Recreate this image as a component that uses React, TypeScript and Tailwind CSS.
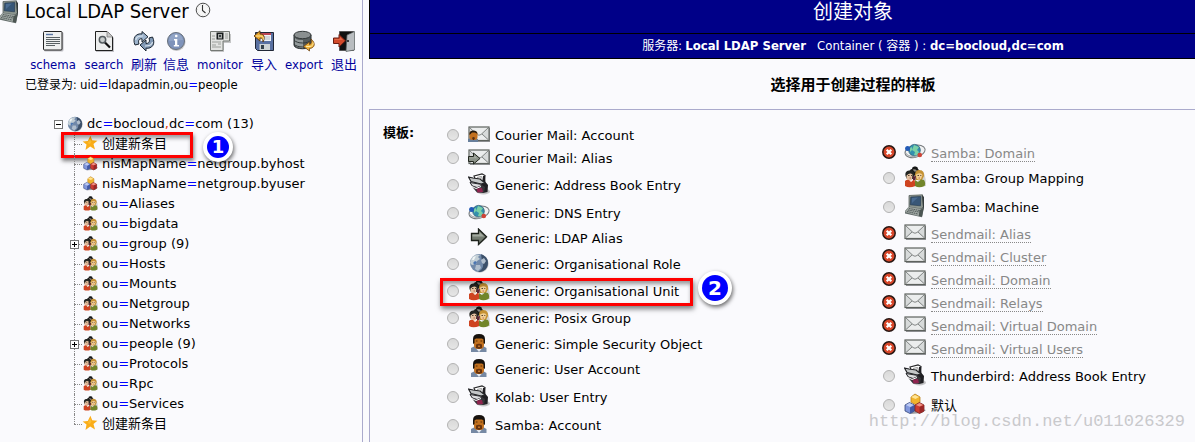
import { useState } from "react";
import type { ComponentType, ReactNode } from "react";

function ComputerIcon({ className }: { className?: string }) {
  return (
    <svg width="22" height="24" viewBox="0 0 22 24" fill="none" className={className}>
      <path d="M5 1.5L18.5 0.8L19.5 13L17 15L5 13Z" fill="#8b958f" stroke="#59615e" strokeWidth="0.8" />
      <path d="M18 1L20 3V15L17 16L19 13Z" fill="#343b3b" />
      <path d="M6.8 3L16.8 2.5L16.5 11.8L6.2 10.8Z" fill="#385777" stroke="#22364c" strokeWidth="0.6" />
      <path d="M8 4L14 3.6L8 9Z" fill="#4b6c92" />
      <path d="M4.5 13L17 14.5L20 13.5L18 23.2L1 19.5L1 17Z" fill="#626b69" />
      <path d="M4.5 13L17.5 15L14.5 22L1 18Z" fill="#9ea6a2" />
      <path d="M5 14.5L15.5 16.5M4 16L15 18M3 17.5L14 20" stroke="#4c5553" strokeWidth="0.9" strokeDasharray="1.6 0.7" />
      <path d="M15.5 16L19.5 14.5L18 22.5L14.8 22Z" fill="#4b5552" />
    </svg>
  );
}

function ClockIcon() {
  return (
    <svg width="16" height="16" viewBox="0 0 16 16" fill="none">
      <circle cx="8" cy="8" r="6.8" fill="#f7f7f7" stroke="#4d4d4d" strokeWidth="1" />
      <circle cx="8" cy="8" r="5.5" stroke="#cccccc" strokeWidth="0.8" strokeDasharray="0.8 2" />
      <path d="M7.5 3V8.5L10.5 11" stroke="#333" strokeWidth="1.1" />
    </svg>
  );
}

function SchemaIcon() {
  return (
    <svg width="22" height="22" viewBox="0 0 22 22" fill="none">
      <rect x="2" y="2" width="19.5" height="19.5" rx="1.5" fill="#bfbfc5" />
      <rect x="1.5" y="1.5" width="18.5" height="18.5" rx="1" fill="#eef0f0" stroke="#222" />
      <path d="M4 4.5H11" stroke="#5874a3" strokeWidth="1.4" />
      <path d="M4 7.5H18M4 9.5H18M4 11.5H18M4 13.5H18M4 15.5H13" stroke="#596164" strokeWidth="1" />
    </svg>
  );
}

function SearchIcon() {
  return (
    <svg width="22" height="22" viewBox="0 0 22 22" fill="none">
      <path d="M3 2H15L21 8V22H3Z" fill="#c2c2c7" />
      <path d="M2.5 1.5H14L19.5 7V20.5H2.5Z" fill="#edeeee" stroke="#202020" />
      <path d="M14 1.5V7H19.5" fill="#c9caca" stroke="#777" strokeWidth="0.7" />
      <path d="M11.5 12L17 17.5" stroke="#101010" strokeWidth="2.2" />
      <circle cx="9.5" cy="9.8" r="3.2" fill="#c7cccc" stroke="#555c60" strokeWidth="1.5" />
    </svg>
  );
}

function RefreshIcon() {
  return (
    <svg width="22" height="22" viewBox="0 0 22 22" fill="none">
      <path d="M2 15C-1 8 3 3 9 4V1.5L15 6.8L9 12V8.8C5.5 8.5 5 11 6 14Z" fill="#9eb4cd" stroke="#1c2733" />
      <path d="M19.5 7C23 14 19 19 13 18.2V21L7 15L13 10V13.5C16.5 13.5 17 11 16 8Z" fill="#8299b5" stroke="#1c2733" />
      <path d="M2.8 10C3 7 5.5 5.8 10 6M19.5 12C19 15 16.5 16 12 16" stroke="#dbe5ed" strokeWidth="1.2" />
    </svg>
  );
}

function InfoIcon() {
  return (
    <svg width="22" height="22" viewBox="0 0 22 22" fill="none">
      <circle cx="11.5" cy="12" r="9" fill="#c5c5c7" />
      <circle cx="11" cy="11" r="8.5" fill="#7f93ba" stroke="#68717c" />
      <path d="M4 11A7 7 0 0 1 18 10Z" fill="#91a4c6" />
      <path d="M9 9H12.3V15H14V16.5H8.8V15H10V10.5H9Z" fill="#fff" />
      <rect x="10" y="4.8" width="2.5" height="2.5" rx="1" fill="#fff" />
    </svg>
  );
}

function MonitorIcon() {
  return (
    <svg width="22" height="22" viewBox="0 0 22 22" fill="none">
      <path d="M2 4H22V13H15V22H2Z" fill="#c5c6c7" />
      <path d="M1.5 1.5H20.5V11H14V20.5H1.5Z" fill="#e2e3e1" stroke="#747874" />
      <rect x="7.5" y="2.5" width="7" height="7" fill="#171b1c" />
      <path d="M9 4H13V8.5H9Z" fill="#a6a9a6" />
      <path d="M10 5H12V7H10Z" fill="#394044" />
      <path d="M16 4H19M16 6H19M16 8H19M3 6H6M3 9H6M3 12H12M3 15H7M9 14H12M3 17H12" stroke="#9b9e9a" />
    </svg>
  );
}

function ImportIcon() {
  return (
    <svg width="22" height="22" viewBox="0 0 22 22" fill="none">
      <path d="M2.5 2.5H20.5V20.5H4.5L2.5 18.5Z" fill="#5970a1" stroke="#202736" />
      <path d="M7 3H18V11H7Z" fill="#f0f2f6" />
      <path d="M7 3H18V5H7Z" fill="#bd4553" />
      <path d="M9 7H17M9 9H17" stroke="#b4b9c0" />
      <path d="M6.5 14H17V20H6.5Z" fill="#cdd2d4" />
      <path d="M8 15H11V19H8Z" fill="#34404a" />
      <path d="M1 6L7 0.8V4C11 4 12.5 7 10 12C10 9 9 8 7 8V11Z" fill="#ecaa2e" stroke="#583713" strokeWidth="0.9" />
      <path d="M3 6H8C10 6 11 8 10 10" stroke="#fbe3a0" />
    </svg>
  );
}

function ExportIcon() {
  return (
    <svg width="22" height="22" viewBox="0 0 22 22" fill="none">
      <path d="M1 5V15C1 20 18 20 18 15V5Z" fill="#545a5b" stroke="#292e30" />
      <path d="M2 8V15C4 18 8 18 10 18V10C6 10 4 10 2 8Z" fill="#92999a" />
      <ellipse cx="9.5" cy="5" rx="8.5" ry="3.7" fill="#8a8f90" stroke="#333839" />
      <path d="M1 10C4 14 15 14 18 10M1 14C4 18 15 18 18 14" stroke="#333a3b" />
      <path d="M18 9C23 13 22 18 16.5 18.5V21L10.5 16.5L16.5 12V14.5C18.5 14 19 12 18 9Z" fill="#eeb23c" stroke="#6e4517" strokeWidth="0.8" />
      <path d="M13 16.5H17C20 16 20.5 14 20 12.5" stroke="#ffeaa1" />
    </svg>
  );
}

function LogoutIcon() {
  return (
    <svg width="22" height="22" viewBox="0 0 22 22" fill="none">
      <path d="M6.5 1.5H20.5V20.5H6.5Z" fill="#111" stroke="#555" />
      <path d="M14 5L21.5 1.5V20L13 21.5Z" fill="#b9bdc0" stroke="#555b5c" strokeWidth="0.7" />
      <path d="M14 11H16" stroke="#111" strokeWidth="1.4" />
      <path d="M0.5 8H6V4.5L12.5 10.8L6 17V13.5H0.5Z" fill="#d24a2b" stroke="#681d13" />
      <path d="M1.5 9H7V7L10 10H1.5Z" fill="#e26a49" />
    </svg>
  );
}

function GlobeIcon({ size = 20 }: { size?: number }) {
  return (
    <svg width={size} height={size} viewBox="0 0 20 20" fill="none">
      <circle cx="10.7" cy="10.7" r="9" fill="#c8c8ca" />
      <circle cx="10" cy="10" r="9" fill="#7189a9" />
      <path d="M12 1.2C18 3 20 8 18.5 13C17 17 14 19 9 19C15 16 15 11 13 8Z" fill="#3c506a" />
      <path d="M2 6C4 2 8 1 11 2L9 4L11 6L8 8L7 11L3 12L1 10Z" fill="#c2ced5" />
      <path d="M12 7L15 5L17 8L15 11L13 10ZM7 12L11 12L12 15L9 18L6 16Z" fill="#b0becd" />
      <path d="M4 4L7 3L5 7L3 7Z" fill="#f0f5f5" />
      <path d="M6 8L8 9L6 12L4 10Z" fill="#4b75b1" />
    </svg>
  );
}

function StarIcon() {
  return (
    <svg width="16" height="16" viewBox="0 0 16 16">
      <path d="M8.4 0.8L10.2 5.3L15.4 5.7L11.5 9.1L13 14.6L8.2 11.6L3.5 14.9L4.5 9.6L0.6 6.6L5.8 5.9Z" fill="#faad19" />
      <path d="M8.2 3.2L9.5 6.5L8 9L5.5 8L6.4 6.8Z" fill="#fdbd34" />
    </svg>
  );
}

function PeopleIcon({ size = 22 }: { size?: number }) {
  return (
    <svg width={size} height={size} viewBox="0 0 22 22">
      <path d="M17 4Q22 6 22 20L12 21Z" fill="#d2d2d2" />
      <path d="M6 5Q6 3 8 3Q8 0 11 0.5Q14 0 14 3L16 5L11 10Z" fill="#151615" />
      <path d="M8.5 3.5Q11 2.5 13 4.5L11 6Z" fill="#8d8a82" />
      <path d="M1.5 10Q0.5 5 5 4.5Q10 3.5 10.5 9L9 13H3Z" fill="#242522" />
      <path d="M2.5 9.5Q6 6 8.5 8.5L8 14Q4 16 2.5 12Z" fill="#e6c3a2" />
      <path d="M1 15Q3 13 5 14L7 16L10.5 13L11.5 20Q5 22.5 1 20Z" fill="#ce4421" />
      <path d="M11 9Q11 4 15.5 4Q20.5 4.5 20 10L18 14H12Z" fill="#c59234" />
      <path d="M12 8.5Q17 6 18.5 9L17 13Q14 15 12.5 12Z" fill="#f1cf94" />
      <path d="M11 14L14 16L17 13.5L20 14Q22 17 20.5 20Q15 22.5 11 20Z" fill="#71852a" />
      <path d="M8.5 10.5L12 10L11.5 14L9 14Z" fill="#5b2532" />
      <path d="M4 9.5H5.5M7 9.5H8M13.5 9.5H15M16.3 9.5H17.3" stroke="#433322" strokeWidth="0.9" />
      <path d="M5.5 12H7M14.5 12H16" stroke="#b35545" strokeWidth="0.8" />
    </svg>
  );
}

function CubesIcon({ size = 22 }: { size?: number }) {
  return (
    <svg width={size} height={size} viewBox="0 0 22 22">
      <path d="M4 18L13 15L22 17L18 20L7 21Z" fill="#9d9da0" />
      <path d="M7 4L11 1L16 4V9L12 12L7 9Z" fill="#f1b42d" stroke="#bd8420" strokeWidth="0.8" />
      <path d="M7 4L11 2L15 4L11.5 6Z" fill="#ffe494" />
      <path d="M1 12L5.5 9.5L10.5 12V18L6 20.5L1 18Z" fill="#8298dd" stroke="#344579" strokeWidth="0.8" />
      <path d="M6 14.5L10.5 12V18L6 20.5Z" fill="#4359a5" />
      <path d="M2 12L5.5 10L9.5 12L6 14Z" fill="#bdcaf5" />
      <path d="M11 12L15.5 9.5L20 12V18L15.5 20.5L11 18Z" fill="#ce3c32" stroke="#7a2523" strokeWidth="0.8" />
      <path d="M15.5 14L20 12V18L15.5 20.5Z" fill="#9b2728" />
      <path d="M12 12L15.5 10L19 12L15.5 13.5Z" fill="#ee9386" />
    </svg>
  );
}

function EnvelopeShape() {
  return (
    <>
      <path d="M2 2H22V16H2Z" fill="#929497" />
      <rect x="1" y="1" width="20" height="13.5" fill="#ebeded" stroke="#5d625e" strokeWidth="1.2" />
      <path d="M2 2.5L9 8L2 14ZM20 2.5L13 8L20 14Z" fill="#d7dada" />
      <path d="M2 2L9 8.5Q11 10 13 8.5L20 2M2 13.5L8 8M20 13.5L14 8" stroke="#777c7a" strokeWidth="0.9" fill="none" />
    </>
  );
}

function MailIcon() {
  return (
    <svg width="22" height="16" viewBox="0 0 22 16">
      <EnvelopeShape />
    </svg>
  );
}

function MailUserIcon() {
  return (
    <svg width="22" height="16" viewBox="0 0 22 16">
      <EnvelopeShape />
      <path d="M0 16V13L4 12L10 13V16Z" fill="#687f9c" />
      <rect x="1.5" y="5" width="8" height="9" rx="3" fill="#c2701f" />
      <path d="M1.5 9V7Q2 4.5 5.5 4.5Q9 4.5 9.5 8L7 6.5H4Z" fill="#201912" />
      <path d="M4 12Q5.5 10 7 12L6 14H5Z" fill="#563016" />
    </svg>
  );
}

function MailForwardIcon() {
  return (
    <svg width="22" height="16" viewBox="0 0 22 16">
      <EnvelopeShape />
      <path d="M0.5 7.5H5.5V4L12 9.5L5.5 15V12.5H0.5Z" fill="#8c9389" stroke="#22271f" />
      <path d="M1.5 8.5H6.5V6.5L9 9.3H1.5Z" fill="#a9b0a6" />
    </svg>
  );
}

function AddressBookIcon() {
  return (
    <svg width="22" height="22" viewBox="0 0 22 22">
      <ellipse cx="15.5" cy="18.5" rx="6.5" ry="3" fill="#c4c4c6" />
      <path d="M6 3L14 0.8L17 2.5L16 10L8 9Z" fill="#fff" stroke="#262628" strokeWidth="1.2" />
      <path d="M9 4.5L13.5 3.5L12.5 7" fill="none" stroke="#999" />
      <path d="M15 3L17 3L17.5 9L20 12L19.5 19L15 20L12 17L14 10Z" fill="#1f1e22" />
      <path d="M0.5 4L5 5L12 6L17 10L13 11L3 8.5Z" fill="#c4c7c8" stroke="#212225" strokeWidth="1.2" />
      <path d="M2 9.5L14 11.5L11 15L5 14Z" fill="#dcdddf" stroke="#242529" />
      <path d="M3 12L9 14L14 12L17 14L16 20L9 19.5L6 16Z" fill="#36353a" />
      <path d="M8.5 15.5L14 15L15 19L9.5 19.5Z" fill="#8f244f" />
      <path d="M3 13L8 15.5L13 13.5" stroke="#fff" fill="none" />
    </svg>
  );
}

function DnsIcon() {
  return (
    <svg width="22" height="16" viewBox="0 0 22 16" fill="none">
      <ellipse cx="11" cy="8.3" rx="10.2" ry="6" fill="#f0f1f2" stroke="#75797c" transform="rotate(-14 11 8)" />
      <circle cx="10.5" cy="7.2" r="5.8" fill="#338fae" stroke="#326177" strokeWidth="0.8" />
      <path d="M10 2L15 4L13 7L15 9L13 12.5L10 12L11 9L8 7ZM6 5L8 4L8 7L6 9Z" fill="#7bd0a6" />
      <path d="M1 9C3 13 8 14.5 14 12.5" stroke="#91999c" strokeWidth="0.9" />
      <circle cx="3.6" cy="5.4" r="2.5" fill="#235bb7" />
      <circle cx="15.8" cy="12" r="2.3" fill="#cf4437" />
    </svg>
  );
}

function ArrowIcon() {
  return (
    <svg width="18" height="18" viewBox="0 0 18 18">
      <path d="M2 6H8.5V1.8L17.5 9.5L8.5 17.5V13H2Z" fill="#c5c6c7" />
      <path d="M1.5 5.5H8.5V1L16.5 8.8L8.5 16.5V12.5H1.5Z" fill="#747c71" stroke="#1c211b" strokeWidth="1.3" />
      <path d="M2.5 6.5H9.5V4L14 8.5H2.5Z" fill="#a2a99f" />
    </svg>
  );
}

function UserIcon() {
  return (
    <svg width="18" height="18" viewBox="0 0 18 18">
      <path d="M1 18V14L5 12H13L16.5 14V18Z" fill="#7689a4" />
      <path d="M6 14.5L9 18L12 14.5Z" fill="#e5e9ef" />
      <rect x="4" y="2" width="10" height="13" rx="4" fill="#c2711f" />
      <path d="M3 10V5Q3 0 9 0Q15 0 15 5V10L13.5 9V5.5L12 4.5H6L4.5 5.5V9Z" fill="#17120e" />
      <path d="M6 14V10.5Q9 8.8 12 10.5V14L9 15Z" fill="#68330e" />
      <path d="M8 11.5H10V13H8Z" fill="#bf732c" />
      <path d="M5.8 7H7.5M10.5 7H12.2" stroke="#3c2009" strokeWidth="0.8" />
    </svg>
  );
}

function InvalidIcon() {
  return (
    <svg width="14" height="14" viewBox="0 0 14 14">
      <circle cx="7" cy="7" r="6.2" fill="#d8472a" stroke="#281713" strokeWidth="1.5" />
      <path d="M4.7 4.7L9.3 9.3M9.3 4.7L4.7 9.3" stroke="#fff" strokeWidth="2.2" />
    </svg>
  );
}

interface Tool {
  label: string;
  width: string;
  icon: ComponentType;
}

const TOOLS: Tool[] = [
  { label: "schema", width: "w-[46px]", icon: SchemaIcon },
  { label: "search", width: "w-10", icon: SearchIcon },
  { label: "刷新", width: "w-6", icon: RefreshIcon },
  { label: "信息", width: "w-6", icon: InfoIcon },
  { label: "monitor", width: "w-12", icon: MonitorIcon },
  { label: "导入", width: "w-6", icon: ImportIcon },
  { label: "export", width: "w-10", icon: ExportIcon },
  { label: "退出", width: "w-6", icon: LogoutIcon },
];

interface Entry {
  name: string;
  kind: "new" | "map" | "ou";
  expandable?: boolean;
  step?: string;
}

const ENTRIES: Entry[] = [
  { name: "创建新条目", kind: "new", step: "1" },
  { name: "nisMapName=netgroup.byhost", kind: "map" },
  { name: "nisMapName=netgroup.byuser", kind: "map" },
  { name: "ou=Aliases", kind: "ou" },
  { name: "ou=bigdata", kind: "ou" },
  { name: "ou=group (9)", kind: "ou", expandable: true },
  { name: "ou=Hosts", kind: "ou" },
  { name: "ou=Mounts", kind: "ou" },
  { name: "ou=Netgroup", kind: "ou" },
  { name: "ou=Networks", kind: "ou" },
  { name: "ou=people (9)", kind: "ou", expandable: true },
  { name: "ou=Protocols", kind: "ou" },
  { name: "ou=Rpc", kind: "ou" },
  { name: "ou=Services", kind: "ou" },
  { name: "创建新条目", kind: "new" },
];

interface Template {
  name: string;
  height: string;
  icon: ComponentType;
  disabled?: boolean;
  step?: string;
}

const LEFT_TEMPLATES: Template[] = [
  { name: "Courier Mail: Account", height: "h-[22px]", icon: MailUserIcon },
  { name: "Courier Mail: Alias", height: "h-6", icon: MailForwardIcon },
  { name: "Generic: Address Book Entry", height: "h-[30px]", icon: AddressBookIcon },
  { name: "Generic: DNS Entry", height: "h-[26px]", icon: DnsIcon },
  { name: "Generic: LDAP Alias", height: "h-6", icon: ArrowIcon },
  { name: "Generic: Organisational Role", height: "h-7", icon: GlobeIcon },
  { name: "Generic: Organisational Unit", height: "h-[26px]", icon: PeopleIcon, step: "2" },
  { name: "Generic: Posix Group", height: "h-7", icon: PeopleIcon },
  { name: "Generic: Simple Security Object", height: "h-6", icon: UserIcon },
  { name: "Generic: User Account", height: "h-[26px]", icon: UserIcon },
  { name: "Kolab: User Entry", height: "h-[30px]", icon: AddressBookIcon },
  { name: "Samba: Account", height: "h-[26px]", icon: UserIcon },
];

const RIGHT_TEMPLATES: Template[] = [
  { name: "Samba: Domain", height: "h-6", icon: DnsIcon, disabled: true },
  { name: "Samba: Group Mapping", height: "h-7", icon: PeopleIcon },
  { name: "Samba: Machine", height: "h-[30px]", icon: ComputerIcon },
  { name: "Sendmail: Alias", height: "h-[22px]", icon: MailIcon, disabled: true },
  { name: "Sendmail: Cluster", height: "h-6", icon: MailIcon, disabled: true },
  { name: "Sendmail: Domain", height: "h-[22px]", icon: MailIcon, disabled: true },
  { name: "Sendmail: Relays", height: "h-6", icon: MailIcon, disabled: true },
  { name: "Sendmail: Virtual Domain", height: "h-[22px]", icon: MailIcon, disabled: true },
  { name: "Sendmail: Virtual Users", height: "h-6", icon: MailIcon, disabled: true },
  { name: "Thunderbird: Address Book Entry", height: "h-8", icon: AddressBookIcon },
  { name: "默认", height: "h-[26px]", icon: CubesIcon },
];

// "=" is drawn blue and "," red in every DN
function Dn({ children, plainComma }: { children: string; plainComma?: boolean }) {
  const parts: ReactNode[] = children.split(/([=,])/).map((part, i) => {
    if (part === "=") return <span key={i} className="text-[#0000ff]">=</span>;
    if (part === "," && !plainComma) return <span key={i} className="text-[#dd3300]">,</span>;
    return part;
  });
  return <>{parts}</>;
}

function Toggle({ open }: { open?: boolean }) {
  return (
    <button type="button" aria-label={open ? "collapse" : "expand"} className="relative block size-[9px] shrink-0 bg-white">
      <svg width="9" height="9" viewBox="0 0 9 9" fill="none" stroke="#000">
        <rect x="0.5" y="0.5" width="8" height="8" stroke="#777" />
        <path d="M2 4.5H7" />
        {!open && <path d="M4.5 2V7" />}
      </svg>
    </button>
  );
}

function TreeRow({ entry, last }: { entry: Entry; last: boolean }) {
  return (
    <li className="relative flex h-5 items-center">
      <div className="relative flex h-5 w-3 shrink-0 items-center">
        <div className={`absolute left-1 top-0 border-l border-dotted border-[#888888] ${last ? "h-2.5" : "h-5"}`} />
        <div className="absolute left-1 top-2.5 w-2 border-t border-dotted border-[#888888]" />
        {entry.expandable && <Toggle />}
      </div>
      <a href="#" className="flex items-center gap-1 whitespace-nowrap">
        <span className="mb-0.5 flex w-4 shrink-0 justify-center">
          {entry.kind === "new" && <StarIcon />}
          {entry.kind === "map" && <CubesIcon size={15} />}
          {entry.kind === "ou" && <PeopleIcon size={15} />}
        </span>
        <span><Dn>{entry.name}</Dn></span>
      </a>
      {entry.step && (
        <>
          <div className="pointer-events-none absolute -left-[9px] -top-0.5 h-[26px] w-[132px] border-3 border-[#fe0000] shadow-[1px_3px_4px_rgba(0,0,0,0.5),inset_1px_3px_4px_rgba(0,0,0,0.4)]" />
          <div className="absolute -top-0.5 left-[133px] z-10 flex size-[30px] items-center justify-center rounded-full bg-white shadow-[1px_2px_4px_rgba(0,0,0,0.6)]">
            <span className="flex size-[22px] items-center justify-center rounded-full bg-[#0000fe] text-lg font-bold text-white">{entry.step}</span>
          </div>
        </>
      )}
    </li>
  );
}

function TemplateRow({ template, selected, onSelect }: { template: Template; selected: boolean; onSelect: () => void }) {
  const { name, height, icon: Icon, disabled, step } = template;
  return (
    <li className={`relative flex items-center ${height}`}>
      <label className="flex items-center whitespace-nowrap">
        {disabled ? (
          <InvalidIcon />
        ) : (
          <input
            type="radio"
            name="template"
            checked={selected}
            onChange={onSelect}
            className="mx-px size-3 shrink-0 appearance-none rounded-full border border-[#b2b2b2] bg-linear-to-b from-[#d9d9d9] to-[#e6e6e6] checked:border-4 checked:border-[#555555]"
          />
        )}
        <span className="mb-0.5 ml-2 flex w-[22px] shrink-0 justify-center"><Icon /></span>
        {disabled ? (
          <span className="ml-[5px] mt-1 border-b border-dotted border-[#888888] leading-[14px] text-[#888888]">{name}</span>
        ) : (
          <span className="ml-[5px] mt-0.5">{name}</span>
        )}
      </label>
      {step && (
        <>
          <div className="pointer-events-none absolute -left-1.5 top-0 h-7 w-[253px] border-3 border-[#fe0000] shadow-[1px_3px_5px_rgba(0,0,0,0.5),inset_1px_3px_4px_rgba(0,0,0,0.4)]" />
          <div className="absolute -top-[7px] left-[252px] flex size-[34px] items-center justify-center rounded-full bg-white shadow-[1px_2px_4px_rgba(0,0,0,0.6)]">
            <span className="flex size-[26px] items-center justify-center rounded-full bg-[#0000fe] text-xl font-bold text-white">{step}</span>
          </div>
        </>
      )}
    </li>
  );
}

export default function App() {
  const [selected, setSelected] = useState("");

  const renderTemplate = (t: Template) => (
    <TemplateRow key={t.name} template={t} selected={selected === t.name} onSelect={() => setSelected(t.name)} />
  );

  return (
    <div className="relative flex min-h-screen overflow-hidden bg-[#fafafd] font-['DejaVu_Sans','Noto_Sans_CJK_SC',sans-serif] text-[13px] leading-5 text-black">
      <aside className="w-[363px] shrink-0 border-r border-[#aaaacc]">
        <div className="font-['DejaVu_Sans_Condensed','Noto_Sans_CJK_SC',sans-serif]">
          <div className="flex h-6 items-start">
            <ComputerIcon className="-ml-0.5 mr-[5px]" />
            <h1 className="text-xl leading-[22px]">Local LDAP Server</h1>
            <span className="ml-1.5 mt-0.5"><ClockIcon /></span>
          </div>
          <nav className="mt-1.5 flex gap-2 pl-[30px]">
            {TOOLS.map(({ label, width, icon: Icon }) => (
              <a key={label} href="#" className={`flex shrink-0 flex-col items-center whitespace-nowrap text-[#00009c] ${width}`}>
                <Icon />
                <span className="mt-[3px]">{label}</span>
              </a>
            ))}
          </nav>
          <p className="pl-[25px]">
            <span className="text-xs">已登录为: </span>
            <Dn plainComma>uid=ldapadmin,ou=people</Dn>
          </p>
        </div>
        <div className="mt-[19px] pl-[54px]">
          <div className="flex h-5 items-center">
            <Toggle open />
            <span className="mx-1"><GlobeIcon size={16} /></span>
            <a href="#" className="whitespace-nowrap"><Dn>dc=bocloud,dc=com (13)</Dn></a>
          </div>
          <ul className="pl-4">
            {ENTRIES.map((entry, i) => (
              <TreeRow key={i} entry={entry} last={i === ENTRIES.length - 1} />
            ))}
          </ul>
        </div>
      </aside>

      <main className="ml-1.5 flex min-w-[968px] flex-1 flex-col">
        <header className="border border-t-0 border-black bg-[#000088] text-center font-['DejaVu_Sans_Condensed','Noto_Sans_CJK_SC',sans-serif] text-white">
          <h2 className="h-[34px] border-b border-black text-xl leading-6">创建对象</h2>
          <p className="h-6 leading-6">
            <span className="text-xs">服务器: </span>
            <b>Local LDAP Server</b> &nbsp; Container ( <span className="text-xs">容器</span> ) : <b>dc=bocloud,dc=com</b>
          </p>
        </header>
        <h3 className="mb-[15px] mt-[17px] text-center text-[15px] font-bold leading-[18px]">选择用于创建过程的样板</h3>
        <form className="flex flex-1 border border-b-0 border-[#aaaacc] pt-3.5">
          <div className="w-[76px] shrink-0 pl-[13px] font-bold leading-[18px]">模板:</div>
          <ul className="w-[436px] shrink-0">{LEFT_TEMPLATES.map(renderTemplate)}</ul>
          <ul className="flex-1 pt-4">{RIGHT_TEMPLATES.map(renderTemplate)}</ul>
        </form>
      </main>

      <div className="pointer-events-none absolute bottom-2.5 right-2.5 font-['Liberation_Mono',monospace] text-[17px] leading-5 text-[#c9c9cc]">
        http://blog.csdn.net/u011026329
      </div>
    </div>
  );
}
